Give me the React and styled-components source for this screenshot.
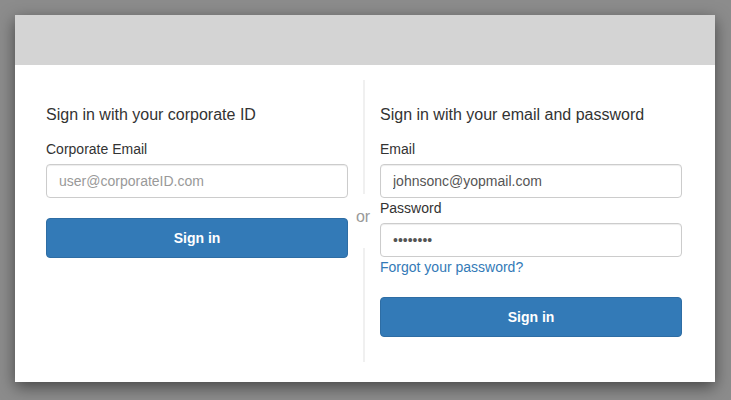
import React from "react";
import styled, { createGlobalStyle } from "styled-components";

const Global = createGlobalStyle`
  html, body { margin: 0; padding: 0; height: 100%; }
  body {
    background: #8c8c8c;
    font-family: "Liberation Sans", Arial, Helvetica, sans-serif;
    color: #333;
  }
  * { box-sizing: border-box; }
`;

const Page = styled.div`
  padding: 15px;
`;

const Modal = styled.div`
  width: 700px;
  background: #fff;
  box-shadow: 0 5px 15px rgba(0, 0, 0, 0.5);
`;

const Banner = styled.div`
  height: 50px;
  background: #d4d4d4;
`;

const Body = styled.div`
  display: flex;
  padding: 15px 33px 20px 31px;
`;

const Column = styled.div`
  width: 302px;
  padding: 25px 0;
  display: flex;
  flex-direction: column;
`;

const Divider = styled.div`
  width: 32px;
  display: flex;
  flex-direction: column;
  align-items: center;
`;

const Line = styled.div`
  flex: 1;
  width: 2px;
  background: #f0f0f0;
`;

const Or = styled.span`
  height: 54px;
  padding-top: 13px;
  padding-right: 2px;
  font-size: 16px;
  line-height: 20px;
  color: #999;
`;

const Heading = styled.div`
  font-size: 16px;
  line-height: 20px;
  color: #333;
  margin-bottom: 14px;
`;

const Label = styled.label`
  display: block;
  font-size: 14px;
  line-height: 20px;
  color: #333;
  margin-bottom: 5px;
`;

const Input = styled.input`
  display: block;
  width: 100%;
  height: 34px;
  padding: 6px 12px;
  font-family: inherit;
  font-size: 14px;
  line-height: 20px;
  color: #555;
  background: #fff;
  border: 1px solid #ccc;
  border-radius: 4px;
  box-shadow: inset 0 1px 1px rgba(0, 0, 0, 0.075);
  outline: none;
  margin: 0;
  &::placeholder { color: #999; }
`;

const Link = styled.a`
  display: block;
  font-size: 14px;
  line-height: 20px;
  color: #337ab7;
  text-decoration: none;
`;

const Button = styled.button`
  display: block;
  width: 100%;
  height: 40px;
  margin-top: 20px;
  font-family: inherit;
  font-size: 14px;
  font-weight: bold;
  color: #fff;
  background: #337ab7;
  border: 1px solid #2e6da4;
  border-radius: 4px;
  cursor: pointer;
`;

export default function App() {
  return (
    <>
      <Global />
      <Page>
        <Modal>
          <Banner />
          <Body>
            <Column>
              <Heading>Sign in with your corporate ID</Heading>
              <Label>Corporate Email</Label>
              <Input placeholder="user@corporateID.com" />
              <Button>Sign in</Button>
            </Column>
            <Divider>
              <Line />
              <Or>or</Or>
              <Line />
            </Divider>
            <Column>
              <Heading>Sign in with your email and password</Heading>
              <Label>Email</Label>
              <Input defaultValue="johnsonc@yopmail.com" />
              <Label>Password</Label>
              <Input type="password" defaultValue="password" />
              <Link href="#">Forgot your password?</Link>
              <Button>Sign in</Button>
            </Column>
          </Body>
        </Modal>
      </Page>
    </>
  );
}
